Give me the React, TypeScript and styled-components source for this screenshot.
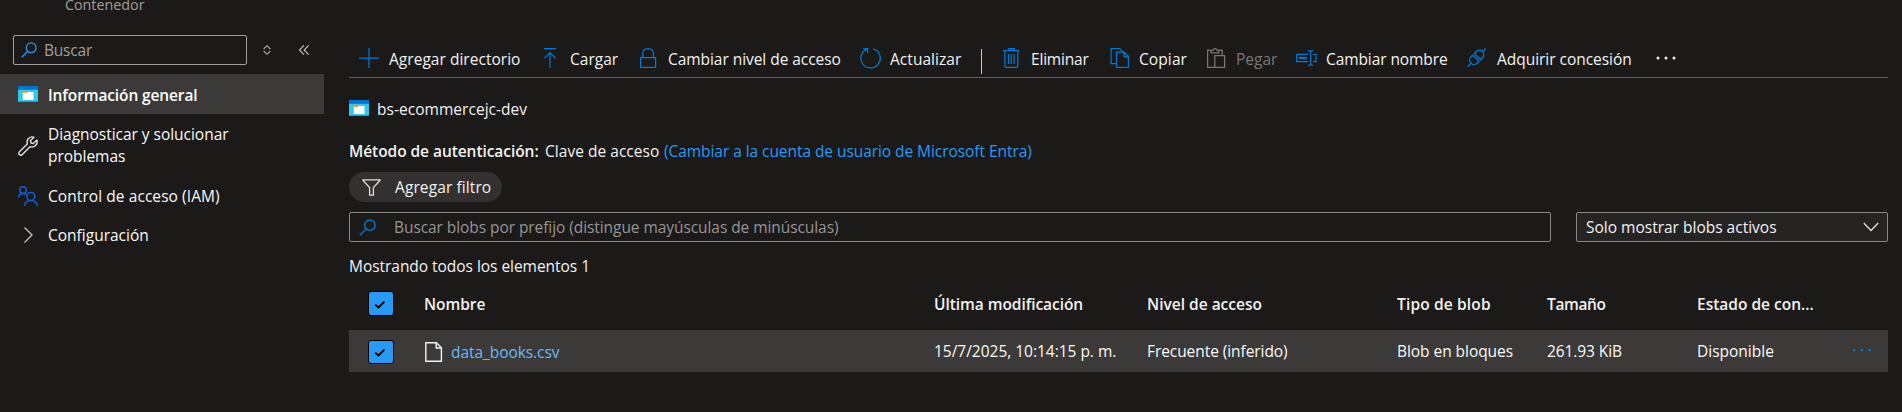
import React from "react";
import styled, { createGlobalStyle } from "styled-components";

const GlobalStyle = createGlobalStyle`
  * { box-sizing: border-box; }
  body {
    margin: 0;
    background: #1b1a19;
    color: #f3f2f1;
    font-family: "Open Sans", "Noto Sans", sans-serif;
    font-size: 15.5px;
    line-height: 22px;
    overflow: hidden;
  }
`;

const Page = styled.div`
  display: flex;
  height: 412px;
  overflow: hidden;
`;

const Label = styled.span<{ $track?: number }>`
  white-space: nowrap;
  letter-spacing: ${(p) => p.$track ?? 0}px;
`;

/* Sidebar */
const Sidebar = styled.nav`
  flex: none;
  width: 324px;
`;

const ResourceKind = styled.div`
  height: 40px;
  margin-top: -5px;
  padding-left: 65px;
  font-size: 14.3px;
  line-height: 20px;
  color: #a19f9d;
`;

const SearchRow = styled.div`
  display: flex;
  align-items: center;
  height: 30px;
  padding-left: 13px;
`;

const MenuSearch = styled.div`
  display: flex;
  align-items: center;
  width: 234px;
  height: 30px;
  padding-left: 7px;
  gap: 7px;
  border: 1px solid #a19f9d;
  border-radius: 2px;
  color: #a19f9d;
`;

const MenuTool = styled.span<{ $gap: number }>`
  display: flex;
  margin-left: ${(p) => p.$gap}px;
`;

const Menu = styled.ul`
  margin: 9px 0 0;
  padding: 0;
  list-style: none;
`;

const MenuItem = styled.li<{ $active?: boolean; $height?: number }>`
  display: flex;
  align-items: center;
  gap: 10px;
  height: ${(p) => p.$height ?? 40}px;
  padding-left: 18px;
  background: ${(p) => (p.$active ? "#3b3a39" : "transparent")};
  color: ${(p) => (p.$active ? "#ffffff" : "#faf9f8")};
  font-weight: ${(p) => (p.$active ? 600 : 400)};
`;

const MenuText = styled.span<{ $track?: number; $raised?: boolean }>`
  width: 200px;
  padding-top: ${(p) => (p.$raised ? 0 : 1)}px;
  padding-bottom: ${(p) => (p.$raised ? 1 : 0)}px;
  letter-spacing: ${(p) => p.$track ?? 0}px;
`;

/* Main pane */
const Main = styled.main`
  flex: 1;
  min-width: 0;
  padding: 39px 14px 0 25px;
`;

const Toolbar = styled.div`
  display: flex;
  align-items: center;
  height: 39px;
  padding-left: 10px;
  border-bottom: 1px solid #605e5c;
`;

const Command = styled.div<{ $width: number; $disabled?: boolean }>`
  display: flex;
  flex: none;
  align-items: center;
  gap: 10px;
  width: ${(p) => p.$width}px;
  color: ${(p) => (p.$disabled ? "#797775" : "#f3f2f1")};

  svg { flex: none; }
  span { padding-top: 1px; }
`;

const Divider = styled.div`
  flex: none;
  width: 1px;
  height: 25px;
  margin: 7px 19px 0 0;
  background: #c8c6c4;
`;

const TitleRow = styled.div`
  display: flex;
  align-items: center;
  gap: 8px;
  height: 22px;
  margin-top: 20px;

  svg { margin-top: -2px; }
`;

const AuthRow = styled.div`
  display: flex;
  margin-top: 20px;
`;

const AuthLabel = styled.b`
  width: 196px;
  font-weight: 600;
  letter-spacing: -0.06px;
`;

const AuthValue = styled.span`
  width: 119px;
  letter-spacing: 0.03px;
`;

const AuthLink = styled.a`
  color: #2899f5;
  letter-spacing: -0.06px;
`;

const FilterPill = styled.button`
  display: flex;
  align-items: center;
  gap: 14px;
  width: 153px;
  height: 30px;
  margin: 10px 0;
  padding: 0 0 0 13px;
  border: 0;
  border-radius: 15px;
  background: #323130;
  color: #f3f2f1;
  font: inherit;
`;

const QueryRow = styled.div`
  display: flex;
  justify-content: space-between;
`;

const PrefixSearch = styled.div`
  display: flex;
  align-items: center;
  gap: 18px;
  width: 1202px;
  height: 30px;
  padding-left: 9px;
  border: 1px solid #8a8886;
  border-radius: 2px;
  color: #979593;
`;

const Select = styled.div`
  display: flex;
  align-items: center;
  justify-content: space-between;
  width: 312px;
  height: 30px;
  padding: 0 8px 0 9px;
  border: 1px solid #8a8886;
  border-radius: 2px;
  background: #252423;
`;

const Count = styled.div`
  height: 22px;
  margin-top: 13px;
  letter-spacing: -0.04px;
`;

/* Blob table */
const Row = styled.div<{ $header?: boolean }>`
  display: grid;
  grid-template-columns: 75px 510px 213px 250px 150px 150px 155px 1fr;
  align-items: center;
  height: ${(p) => (p.$header ? 53 : 42)}px;
  color: ${(p) => (p.$header ? "#f3f2f1" : "#faf9f8")};
  font-weight: ${(p) => (p.$header ? 600 : 400)};
  background: ${(p) => (p.$header ? "transparent" : "#3b3a39")};
`;

const CheckCell = styled.div<{ $drop?: number }>`
  display: flex;
  padding: ${(p) => p.$drop ?? 0}px 0 0 19px;
`;

const Checkbox = styled.span<{ $height: number }>`
  display: flex;
  align-items: center;
  justify-content: center;
  width: 26px;
  height: ${(p) => p.$height}px;
  padding: 2px 2px 0 0;
  border: 1px solid #000;
  border-radius: 3px;
  background: #2899f5;
`;

const FileCell = styled.div`
  display: flex;
  align-items: center;
  gap: 8px;
  padding: 1px 0 0 1px;
  color: #6cb8f6;
`;

const MoreDots = styled.svg`
  margin-top: -2px;
`;

const Check = ({ height }: { height: number }) => (
  <Checkbox $height={height}>
    <svg width="12" height="9" viewBox="0 0 12 9" fill="none">
      <path d="M1.300 4.600 4.400 7.400 10.400 1.600" stroke="#000" strokeWidth="1.900" />
    </svg>
  </Checkbox>
);

const ContainerIcon = () => (
  <svg width="20" height="16" viewBox="0 0 20 16">
    <rect width="20" height="16" rx=".6" fill="#32c8ec" />
    <rect width="20" height="3.8" rx=".4" fill="#0072d0" />
    <path d="M0 15.3h20v.2q0 .5-.6.5H.6q-.6 0-.6-.5z" fill="#1f93b5" />
    <path d="M4.6 4.8h4l1.2 1.3v2H4.6z" fill="#f59a3c" />
    <path d="M4.8 7h3.8l1.1-1h5.3q.5 0 .5.5v7q0 .5-.5.5H5.300q-.5 0-.5-.5z" fill="#fff" />
  </svg>
);

const SearchIcon = ({ size, color }: { size: number; color: string }) => (
  <svg width={size} height={size} viewBox="0 0 16 16" fill="none" stroke={color} strokeWidth="1.3">
    <circle cx="10.2" cy="5.8" r="4.9" />
    <path d="M6.7 9.3.7 15.3" />
  </svg>
);

const Icon = ({ children, color = "#0078d4" }: { children: React.ReactNode; color?: string }) => (
  <svg width="20" height="20" viewBox="0 0 20 20" fill="none" stroke={color} strokeWidth="1.25" overflow="visible">
    {children}
  </svg>
);

const commands = [
  {
    text: "Agregar directorio", width: 181, track: 0.03,
    icon: <Icon><path d="M10 0v20M0 10h20" /></Icon>,
  },
  {
    text: "Cargar", width: 98, track: 0,
    icon: <Icon><path d="M4 .6h12M10 20V4.600M4.300 10.400 10 4.600l5.700 5.800" /></Icon>,
  },
  {
    text: "Cambiar nivel de acceso", width: 222, track: -0.05,
    icon: <Icon><path d="M2.600 9.600h15v9.800h-15zM4.600 9.600V6.200Q4.600.7 10 .7t5.500 5.500v3.400" /></Icon>,
  },
  {
    text: "Actualizar", width: 121, track: 0.05,
    icon: <Icon><path d="M13.200.9A9.700 9.700 0 1 1 7.300 1.100M3.300.7h4.300v4.500" /></Icon>,
  },
];

const selectionCommands = [
  {
    text: "Eliminar", width: 108, track: -0.2,
    icon: (
      <Icon>
        <path d="M2 2.700h16.600M7.400 2.700V.6h5.800v2.100M3.800 2.700v15.600q0 1.100 1.100 1.100h10.800q1.100 0 1.100-1.100V2.700M7.500 6v10M10.300 6v10M13.100 6v10" />
      </Icon>
    ),
  },
  {
    text: "Copiar", width: 97, track: 0.1,
    icon: (
      <Icon>
        <path d="M7.300 15.700H2.100V.6h8.600l3.500 3.600M7.500 4.200h7.600l4.300 4.400v10.800H7.500zM14.900 4.200v4.600h4.500" />
      </Icon>
    ),
  },
  {
    text: "Pegar", width: 90, track: 0, disabled: true,
    icon: (
      <Icon color="#797775">
        <path d="M8.700 19.300H1.600V2.200h3.500M12.800 2.200h3.300v5.300M5.100 4.900V2.200h2.100Q7.400.6 9 .6t1.800 1.600h2v2.700zM8.800 7.500h9.800v11.900H8.800z" />
      </Icon>
    ),
  },
  {
    text: "Cambiar nombre", width: 171, track: -0.09,
    icon: (
      <Icon>
        <path d="M12.200 6.300H.7v7.400h11.500M17 6.300h3v7.400h-3" />
        <path d="M2.800 10h8" strokeWidth="2.200" />
        <path d="M12 2.700q2.600 0 2.600 1.300 0-1.300 2.600-1.300M14.600 4v12M12 17.300q2.600 0 2.600-1.300 0 1.300 2.600 1.300" />
      </Icon>
    ),
  },
  {
    text: "Adquirir concesión", width: 188, track: -0.03,
    icon: (
      <Icon>
        <g transform="translate(9.700 9.400) rotate(-45)" strokeWidth="1.400">
          <path d="M-12.700 0h4.200M8.500 0h4.200M-1.200-4.400v8.800h-2.600a4.400 4.400 0 0 1 0-8.800zM1.200-4.400v8.800h2.600a4.400 4.400 0 0 0 0-8.800z" />
        </g>
      </Icon>
    ),
  },
];

export default function App() {
  return (
    <>
      <GlobalStyle />
      <Page>
        <Sidebar>
          <ResourceKind>Contenedor</ResourceKind>
          <SearchRow>
            <MenuSearch>
              <SearchIcon size={16} color="#2899f5" />
              <Label $track={-0.2}>Buscar</Label>
            </MenuSearch>
            <MenuTool $gap={16}>
              <svg width="8" height="10" viewBox="0 0 8 10" fill="none" stroke="#a19f9d" strokeWidth="1.2">
                <path d="M.6 4 4 .8 7.400 4M.6 6 4 9.200 7.400 6" />
              </svg>
            </MenuTool>
            <MenuTool $gap={28}>
              <svg width="10" height="10" viewBox="0 0 10 10" fill="none" stroke="#c8c6c4" strokeWidth="1.100">
                <path d="M4.900.4.500 5l4.400 4.600M9.600.4 5.200 5l4.400 4.600" />
              </svg>
            </MenuTool>
          </SearchRow>
          <Menu>
            <MenuItem $active>
              <ContainerIcon />
              <MenuText $track={-0.12}>Información general</MenuText>
            </MenuItem>
            <MenuItem $height={63}>
              <Icon color="#e1dfdd">
                <path
                  strokeWidth="1.400"
                  strokeLinejoin="round"
                  d="M15.900 1.200A5.300 5.300 0 0 0 9.300 8L1.400 15.700q-1.300 1.500 0 2.900t2.900 0L12 10.700a5.300 5.300 0 0 0 6.900-6.600l-3.600 3.500-2.300-.6-.6-2.300z"
                />
              </Icon>
              <MenuText $raised $track={-0.03}>Diagnosticar y solucionar problemas</MenuText>
            </MenuItem>
            <MenuItem $height={38}>
              <Icon color="#0f5fd6">
                <g strokeWidth="1.500">
                  <circle cx="5" cy="4" r="3.300" />
                  <circle cx="12.800" cy="10.400" r="4" />
                  <path d="M.3 11.600Q1 7.400 5 7.400q1.900 0 3.200 1.200M6.500 20q.7-5.500 6.300-5.500t6.500 5.500" />
                </g>
              </Icon>
              <MenuText $raised $track={0.07}>Control de acceso (IAM)</MenuText>
            </MenuItem>
            <MenuItem>
              <Icon color="#c8c6c4"><path d="m6.500 2.500 7.600 7.500-7.600 7.500" /></Icon>
              <MenuText $raised>Configuración</MenuText>
            </MenuItem>
          </Menu>
        </Sidebar>

        <Main>
          <Toolbar>
            {commands.map((c) => (
              <Command key={c.text} $width={c.width}>
                {c.icon}
                <Label $track={c.track}>{c.text}</Label>
              </Command>
            ))}
            <Divider />
            {selectionCommands.map((c) => (
              <Command key={c.text} $width={c.width} $disabled={c.disabled}>
                {c.icon}
                <Label $track={c.track}>{c.text}</Label>
              </Command>
            ))}
            <svg width="22" height="4" viewBox="0 0 22 4" fill="#f3f2f1">
              <circle cx="3" cy="2" r="1.500" />
              <circle cx="11" cy="2" r="1.500" />
              <circle cx="19" cy="2" r="1.500" />
            </svg>
          </Toolbar>

          <TitleRow>
            <ContainerIcon />
            <Label $track={0.04}>bs-ecommercejc-dev</Label>
          </TitleRow>

          <AuthRow>
            <AuthLabel>Método de autenticación:</AuthLabel>
            <AuthValue>Clave de acceso</AuthValue>
            <AuthLink>(Cambiar a la cuenta de usuario de Microsoft Entra)</AuthLink>
          </AuthRow>

          <FilterPill>
            <svg width="19" height="17" viewBox="0 0 19 17" fill="none" stroke="#e1dfdd" strokeWidth="1.300">
              <path d="M1 .9h17v.5L11.400 8.500v7.700H7.600V8.500L1 1.400z" />
            </svg>
            <Label $track={0.1}>Agregar filtro</Label>
          </FilterPill>

          <QueryRow>
            <PrefixSearch>
              <SearchIcon size={17} color="#0078d4" />
              <Label $track={-0.07}>Buscar blobs por prefijo (distingue mayúsculas de minúsculas)</Label>
            </PrefixSearch>
            <Select>
              <Label>Solo mostrar blobs activos</Label>
              <svg width="16" height="10" viewBox="0 0 16 10" fill="none" stroke="#e1dfdd" strokeWidth="1.400">
                <path d="m.8 1 7.200 7.400L15.200 1" />
              </svg>
            </Select>
          </QueryRow>

          <Count>Mostrando todos los elementos 1</Count>

          <Row $header>
            <CheckCell><Check height={25} /></CheckCell>
            <Label $track={-0.05}>Nombre</Label>
            <Label $track={-0.06}>Última modificación</Label>
            <Label $track={0}>Nivel de acceso</Label>
            <Label $track={0.15}>Tipo de blob</Label>
            <Label $track={-0.38}>Tamaño</Label>
            <Label $track={0}>Estado de con...</Label>
          </Row>
          <Row>
            <CheckCell $drop={1}><Check height={24} /></CheckCell>
            <FileCell>
              <svg width="18" height="20" viewBox="0 0 18 20" fill="none" stroke="#f3f2f1" strokeWidth="1.400">
                <path d="M.8.8h10.600l5 5v13.400H.8zM11.200.8v5.200h5.200" />
              </svg>
              <Label $track={-0.06}>data_books.csv</Label>
            </FileCell>
            <Label $track={-0.02}>15/7/2025, 10:14:15 p. m.</Label>
            <Label $track={-0.07}>Frecuente (inferido)</Label>
            <Label $track={-0.05}>Blob en bloques</Label>
            <Label $track={-0.08}>261.93 KiB</Label>
            <Label>Disponible</Label>
            <MoreDots width="20" height="4" viewBox="0 0 20 4" fill="#0078d4">
              <path d="M1 1h2.200v2.200H1zM8.700 1h2.200v2.200H8.700zM16.400 1h2.200v2.200h-2.200z" />
            </MoreDots>
          </Row>
        </Main>
      </Page>
    </>
  );
}
